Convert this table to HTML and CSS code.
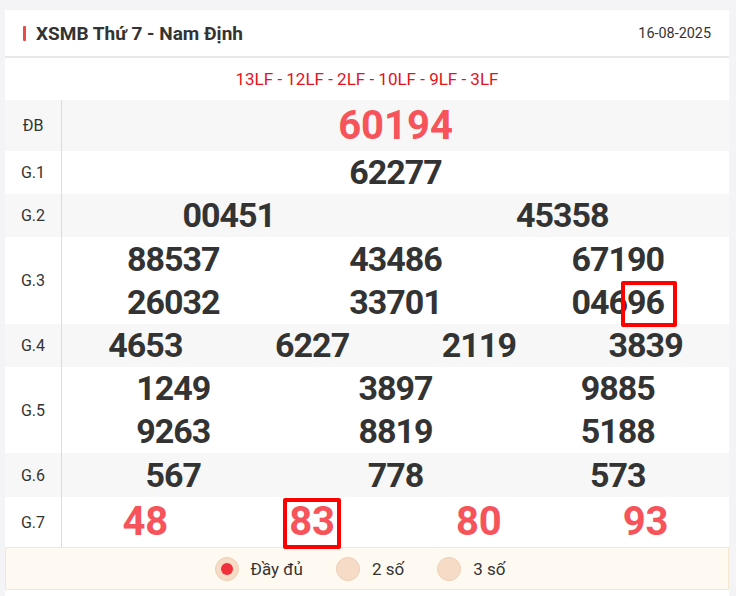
FILE: index.html
```html
<!DOCTYPE html>
<html lang="vi">
<head>
<meta charset="utf-8">
<title>XSMB Thứ 7 - Nam Định</title>
<link rel="stylesheet" href="styles.css">
</head>
<body>
<div class="card">
  <div class="head">
    <h2 class="title">XSMB Thứ 7 - Nam Định</h2>
    <span class="date">16-08-2025</span>
  </div>
  <div class="codes">13LF - 12LF - 2LF - 10LF - 9LF - 3LF</div>
  <div class="table">
    <div class="row alt h51">
      <div class="lbl">ĐB</div>
      <div class="nums c1"><span class="n big red">60194</span></div>
    </div>
    <div class="row h43">
      <div class="lbl">G.1</div>
      <div class="nums c1"><span class="n">62277</span></div>
    </div>
    <div class="row alt h43">
      <div class="lbl">G.2</div>
      <div class="nums c2"><span class="n">00451</span><span class="n">45358</span></div>
    </div>
    <div class="row h87">
      <div class="lbl">G.3</div>
      <div class="nums c3">
        <span class="n">88537</span><span class="n">43486</span><span class="n">67190</span>
        <span class="n">26032</span><span class="n">33701</span><span class="n">046<span class="hl">96</span></span>
      </div>
    </div>
    <div class="row alt h43">
      <div class="lbl">G.4</div>
      <div class="nums c4"><span class="n">4653</span><span class="n">6227</span><span class="n">2119</span><span class="n">3839</span></div>
    </div>
    <div class="row h86">
      <div class="lbl">G.5</div>
      <div class="nums c3">
        <span class="n">1249</span><span class="n">3897</span><span class="n">9885</span>
        <span class="n">9263</span><span class="n">8819</span><span class="n">5188</span>
      </div>
    </div>
    <div class="row alt h44">
      <div class="lbl">G.6</div>
      <div class="nums c3"><span class="n">567</span><span class="n">778</span><span class="n">573</span></div>
    </div>
    <div class="row h50">
      <div class="lbl">G.7</div>
      <div class="nums c4"><span class="n big red">48</span><span class="n big red"><span class="hl hl2">83</span></span><span class="n big red">80</span><span class="n big red">93</span></div>
    </div>
  </div>
  <div class="opts">
    <label class="opt"><span class="radio on"></span><span class="otxt">Đầy đủ</span></label>
    <label class="opt"><span class="radio"></span><span class="otxt">2 số</span></label>
    <label class="opt"><span class="radio"></span><span class="otxt">3 số</span></label>
  </div>
</div>
</body>
</html>
```
FILE: styles.css
```css
* { box-sizing: border-box; }
html, body { margin: 0; padding: 0; }
body {
  background: #f4f4f6;
  font-family: Roboto, "Liberation Sans", Arial, sans-serif;
  color: #333;
  padding: 10px 7px 0 5px;
}
.card {
  background: #fff;
  width: 724px;
  min-height: 586px;
}
.head {
  height: 48px;
  display: flex;
  align-items: center;
  justify-content: space-between;
  padding: 0 18px 0 18px;
  border-bottom: 2px solid #e9e7e9;
}
.title {
  margin: 0;
  font-size: 19px;
  font-weight: 700;
  color: #333;
  display: flex;
  align-items: center;
}
.title::before {
  content: "";
  width: 3px;
  height: 15px;
  background: #e94a4a;
  margin-right: 10px;
  border-radius: 1px;
}
.date {
  font-size: 14.4px;
  color: #333;
}
.codes {
  height: 42px;
  display: flex;
  align-items: center;
  justify-content: center;
  color: #e3131e;
  font-size: 17px;
}
.row {
  display: grid;
  grid-template-columns: 57px 1fr;
  background: #fff;
}
.row.alt { background: #f7f7f7; }
.h43 { height: 43px; }
.h44 { height: 44px; }
.h50 { height: 50px; }
.h51 { height: 51px; }
.h86 { height: 86px; }
.h87 { height: 87px; }
.lbl {
  border-right: 1px solid #dcdcdc;
  display: flex;
  align-items: center;
  justify-content: center;
  font-size: 16px;
  color: #333;
}
.nums { display: grid; align-content: center; }
.c1 { grid-template-columns: 1fr; }
.c2 { grid-template-columns: 1fr 1fr; }
.c3 { grid-template-columns: 1fr 1fr 1fr; }
.c4 { grid-template-columns: 1fr 1fr 1fr 1fr; }
.n {
  text-align: center;
  font-size: 34px;
  font-weight: 700;
  line-height: 43px;
  height: 43px;
  color: #333;
  letter-spacing: -1px;
}
.n.big {
  font-size: 40px;
  line-height: 50px;
  height: 50px;
  letter-spacing: 0;
}
.red { color: #f6535a; }
.hl { position: relative; }
.hl::after {
  content: "";
  position: absolute;
  left: -6px;
  right: -13px;
  top: -1px;
  bottom: -5px;
  border: 4px solid #ff0000;
  border-radius: 2px;
}
.hl2::after { left: -6px; right: -6px; top: 0px; bottom: -4px; }
.opts {
  height: 43px;
  background: #fffaf1;
  border: 1px solid #f5e8d0;
  display: flex;
  align-items: center;
  justify-content: center;
  gap: 33px;
  padding-right: 14px;
}
.opt {
  display: flex;
  align-items: center;
  gap: 12px;
  font-size: 17px;
  color: #333;
}
.radio {
  width: 24px;
  height: 24px;
  border-radius: 50%;
  background: #f6dcc7;
  border: 1px solid #efcdb4;
  display: flex;
  align-items: center;
  justify-content: center;
}
.radio.on::after {
  content: "";
  width: 12px;
  height: 12px;
  border-radius: 50%;
  background: #f0303a;
}
```
